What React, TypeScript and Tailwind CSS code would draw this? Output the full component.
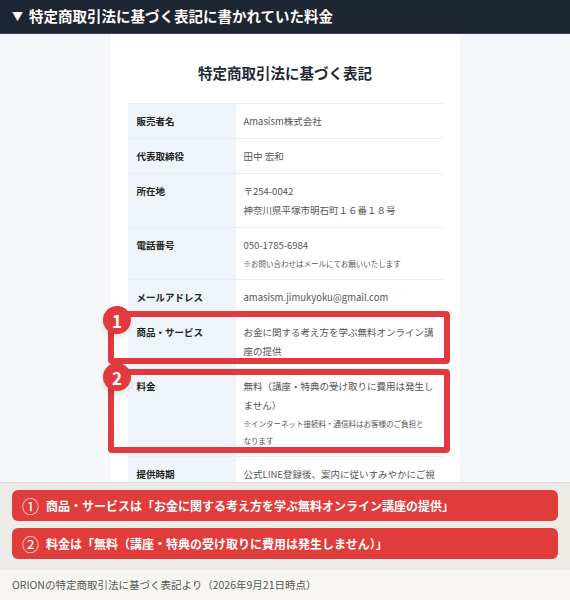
const rows: { label: string; lines: { text: string; small?: boolean }[] }[] = [
  { label: '販売者名', lines: [{ text: 'Amasism株式会社' }] },
  { label: '代表取締役', lines: [{ text: '田中 宏和' }] },
  { label: '所在地', lines: [{ text: '〒254-0042' }, { text: '神奈川県平塚市明石町１６番１８号' }] },
  { label: '電話番号', lines: [{ text: '050-1785-6984' }, { text: '※お問い合わせはメールにてお願いいたします', small: true }] },
  { label: 'メールアドレス', lines: [{ text: 'amasism.jimukyoku@gmail.com' }] },
  { label: '商品・サービス', lines: [{ text: 'お金に関する考え方を学ぶ無料オンライン講' }, { text: '座の提供' }] },
  {
    label: '料金',
    lines: [
      { text: '無料（講座・特典の受け取りに費用は発生し' },
      { text: 'ません）' },
      { text: '※インターネット接続料・通信料はお客様のご負担と', small: true },
      { text: 'なります', small: true },
    ],
  },
  { label: '提供時期', lines: [{ text: '公式LINE登録後、案内に従いすみやかにご視' }] },
]

const notes = [
  { mark: '①', text: '商品・サービスは「お金に関する考え方を学ぶ無料オンライン講座の提供」' },
  { mark: '②', text: '料金は「無料（講座・特典の受け取りに費用は発生しません）」' },
]

export default function App() {
  return (
    <div
      className="w-[570px] h-[600px] flex flex-col overflow-hidden bg-[#f5f7fa]"
      style={{ fontFamily: '"Noto Sans CJK JP", "Noto Sans", sans-serif' }}
    >
      {/* 見出しバー */}
      <div className="h-[34px] shrink-0 flex items-center gap-[6px] px-[12px] bg-[#1e2533] border-b border-[#3a4252] text-white">
        <span className="text-[11px] leading-none">▼</span>
        <span className="text-[14.5px] font-bold leading-none">特定商取引法に基づく表記に書かれていた料金</span>
      </div>

      {/* スクリーンショット部分 */}
      <div className="relative flex-1 min-h-0 overflow-hidden">
        <div className="w-[349px] h-full mx-auto bg-white pt-[28px] px-[17px]">
          <h1 className="text-center text-[14.5px] leading-[22px] font-bold text-[#1f2937] mb-[19px]">
            特定商取引法に基づく表記
          </h1>
          <div className="border-t border-[#e9edf2]">
            {rows.map((row) => (
              <div key={row.label} className="grid grid-cols-[108px_1fr] border-b border-[#e9edf2]">
                <div className="bg-[#eff4fa] pl-[9px] pt-2 pb-[7px] text-[9.5px] leading-[19px] font-bold text-[#222]">
                  {row.label}
                </div>
                <div className="pl-[8px] pt-2 pb-[7px] text-[#555]">
                  {row.lines.map((line, i) => (
                    <div
                      key={i}
                      className={
                        line.small
                          ? 'text-[7.5px] leading-[17px] whitespace-nowrap'
                          : 'text-[9.5px] leading-[19px] whitespace-nowrap'
                      }
                    >
                      {line.text}
                    </div>
                  ))}
                </div>
              </div>
            ))}
          </div>
        </div>

        {/* 赤枠と番号 */}
        <div className="absolute left-[108px] top-[277px] w-[342px] h-[53px] border-[6px] border-[#e03a3e] rounded-[4px]" />
        <div className="absolute left-[108px] top-[335px] w-[342px] h-[84px] border-[6px] border-[#e03a3e] rounded-[4px]" />
        <div className="absolute left-[103px] top-[272px] w-[28px] h-[28px] rounded-full bg-[#e03a3e] shadow-md flex items-center justify-center text-white text-[17px] font-bold leading-none">
          1
        </div>
        <div className="absolute left-[103px] top-[329px] w-[28px] h-[28px] rounded-full bg-[#e03a3e] shadow-md flex items-center justify-center text-white text-[17px] font-bold leading-none">
          2
        </div>
      </div>

      {/* まとめ */}
      <div className="shrink-0 bg-[#ecebe6] border-t border-[#dcdbd6] px-[12px] pt-[7px] pb-[11px] flex flex-col gap-[7px]">
        {notes.map((n) => (
          <div key={n.mark} className="h-[31px] rounded-[6px] bg-[#e03c3c] flex items-center gap-[7px] px-[10px] text-white">
            <span className="text-[17px] leading-[20px]">{n.mark}</span>
            <span className="text-[12px] font-bold leading-[16px] whitespace-nowrap">{n.text}</span>
          </div>
        ))}
      </div>
      <div className="h-[30px] shrink-0 bg-[#f7f6f2] px-[12px] flex items-center text-[10.5px] text-[#555]">
        ORIONの特定商取引法に基づく表記より（2026年9月21日時点）
      </div>
    </div>
  )
}
